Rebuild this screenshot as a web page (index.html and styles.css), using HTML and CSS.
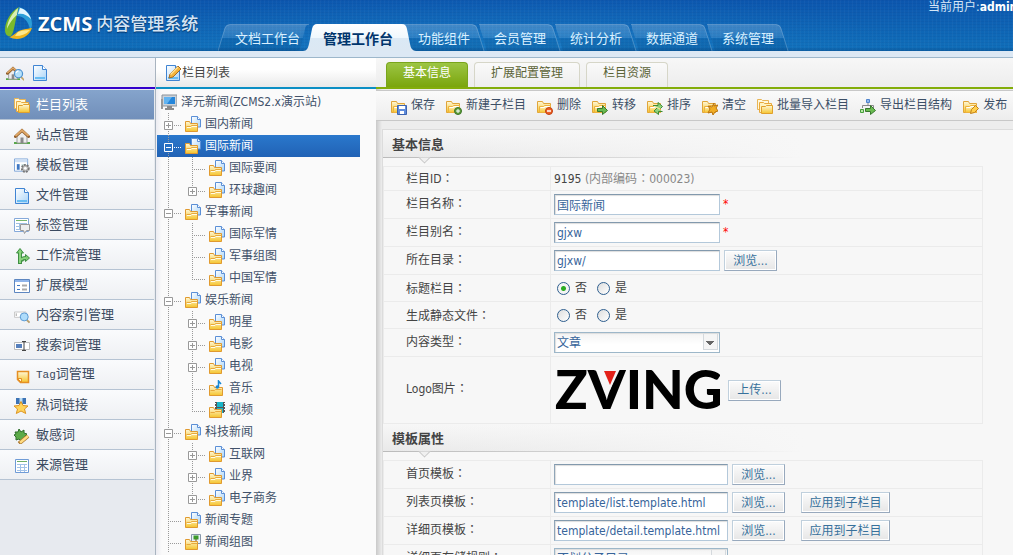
FILE: index.html
```html
<!DOCTYPE html>
<html lang="zh-CN">
<head>
<meta charset="utf-8">
<title>ZCMS内容管理系统</title>
<link rel="stylesheet" href="styles.css">
</head>
<body>
<svg class="sprite" aria-hidden="true">
  <defs>
    <linearGradient id="gold" x1="0" y1="0" x2="0" y2="1"><stop offset="0" stop-color="#fff8d8"/><stop offset="1" stop-color="#f5c42c"/></linearGradient>
    <linearGradient id="paper" x1="0" y1="0" x2="1" y2="1"><stop offset="0" stop-color="#fff"/><stop offset="1" stop-color="#a9d4f8"/></linearGradient>
    <linearGradient id="tabfill" x1="0" y1="0" x2="0" y2="1"><stop offset="0" stop-color="#fff"/><stop offset=".5" stop-color="#f0f8fd"/><stop offset=".52" stop-color="#dbe9f5"/><stop offset="1" stop-color="#dce8f3"/></linearGradient>
    <linearGradient id="dimfill" x1="0" y1="0" x2="0" y2="1"><stop offset="0" stop-color="#fff" stop-opacity=".2"/><stop offset=".5" stop-color="#fff" stop-opacity=".1"/><stop offset=".52" stop-color="#003a70" stop-opacity=".12"/><stop offset="1" stop-color="#003a70" stop-opacity=".2"/></linearGradient>
  </defs>
  <symbol id="folder" viewBox="0 0 16 16">
    <path d="M.5 13.5v-11h5l1 2h7v9z" fill="url(#gold)" stroke="#e0a53a"/>
    <path d="M2.5 13.5v-6h4l1-1h6v7z" fill="url(#gold)" stroke="#eeb23c"/>
    <path d="M3.500 8.500h4l1-1h4" fill="none" stroke="#fff"/>
  </symbol>
  <symbol id="folders" viewBox="0 0 16 16">
    <path d="M.5 10.500v-10h4l1 1h6v9z" fill="#fff8dc" stroke="#e9b555"/>
    <path d="M2.500 13.500v-10h4l1 1h7v9z" fill="#fff3c0" stroke="#e9a93c"/>
    <path d="M4.500 14.500v-7h4l1-1h6v8z" fill="url(#gold)" stroke="#e0a02c"/>
  </symbol>
  <symbol id="node" viewBox="0 0 16 16">
    <path d="M6.500 11V.5h6l3 3V11z" fill="url(#paper)" stroke="#5b8fd6"/>
    <path d="M12.500.5v3h3" fill="#fff" stroke="#5b8fd6"/>
    <path d="M.5 15.500v-10h4l1 2h7v8z" fill="url(#gold)" stroke="#e09a30"/>
    <path d="M1.500 10.500h4l1-1h6" fill="none" stroke="#e8a93c"/>
    <path d="M2 11.500h4l1-1h5" fill="none" stroke="#fffbe6"/>
  </symbol>
  <symbol id="node-music" viewBox="0 0 16 16">
    <path d="M.5 15.500v-10h4l1 2h8v8z" fill="url(#gold)" stroke="#e09a30"/>
    <path d="M1.500 10.500h4l1-1h6" fill="none" stroke="#e8a93c"/>
    <path d="M9.500 7V1l2.500 3" fill="none" stroke="#1787d4" stroke-width="1.500"/><circle cx="8.300" cy="7" r="1.800" fill="#1787d4"/>
  </symbol>
  <symbol id="node-video" viewBox="0 0 16 16">
    <path d="M6 0h10v11H6z" fill="#555"/><path d="M8 0h6v5H8zM8 6h6v5H8z" fill="#19b5c8"/>
    <path d="M6.500 1v10M15.500 1v10" stroke="#fff" stroke-dasharray="1 2"/>
    <path d="M.5 15.500v-10h4l1 2h7v8z" fill="url(#gold)" stroke="#e09a30"/>
    <path d="M1.500 10.500h4l1-1h6" fill="none" stroke="#e8a93c"/>
  </symbol>
  <symbol id="node-image" viewBox="0 0 16 16">
    <path d="M6.500.5h9v9h-9z" fill="#e8f2fb" stroke="#8796a8"/><path d="M8.500 1.500h5v4h-5z" fill="#3d9a2a"/><path d="M11 5v4" stroke="#7a5326"/>
    <path d="M.5 15.500v-10h4l1 2h7v8z" fill="url(#gold)" stroke="#e09a30"/>
    <path d="M1.500 10.500h4l1-1h6" fill="none" stroke="#e8a93c"/>
  </symbol>
  <symbol id="doc" viewBox="0 0 16 16">
    <path d="M1.500.5h9l4 4v11h-13z" fill="url(#paper)" stroke="#3f84d3"/><path d="M10.500.5v4h4" fill="#fff" stroke="#3f84d3"/><path d="M3 12h10v2H3z" fill="#69bdf3"/>
  </symbol>
  <symbol id="house" viewBox="0 0 16 16">
    <path d="M0 14h16v2H0z" fill="#58a84a"/><path d="M3 8l5-5 5 5v7H3z" fill="#eee" stroke="#999"/><path d="M6.500 9.500h3V15h-3z" fill="#888"/>
    <path d="M1.500 8.500L8 2.500l6.500 6" fill="none" stroke="#8f5a26" stroke-width="3" stroke-linecap="round"/><path d="M1.500 8L8 2.300 14.500 8" fill="none" stroke="#dfa868" stroke-width="1.800"/>
  </symbol>
  <symbol id="glass" viewBox="0 0 16 16"><path d="M11 11l4 4" stroke="#c4a465" stroke-width="2"/><circle cx="8" cy="7" r="5" fill="#b5e0fa" stroke="#4f92cf" stroke-width="1.500"/><path d="M5 6q1-2.500 3-2.500" fill="none" stroke="#fff" stroke-width="1.500"/></symbol>
  <symbol id="template" viewBox="0 0 17 16">
    <path d="M.5.500h14v13H.5z" fill="#fff" stroke="#7ba3d8"/><path d="M1 1h13v3H1z" fill="#cfe0f5"/><path d="M3 6h3v6H3z" fill="#3f78c4"/><path d="M8 7h4" stroke="#8bb"/>
    <circle cx="12" cy="10.500" r="3.700" fill="#bbb" stroke="#777" stroke-width="2" stroke-dasharray="2 1.100"/><circle cx="12" cy="10.500" r="1.500" fill="#fff"/>
  </symbol>
  <symbol id="label" viewBox="0 0 16 16">
    <path d="M.5.500h14v13H.5z" fill="#fff" stroke="#85a9da"/><path d="M2 2.500h11" stroke="#77b66b"/><path d="M2 5.500h11M2 8.500h8M2 11.500h5M5.500 5v7M9.500 5v7" stroke="#9fc0e2"/>
    <path d="M6.500 6.500h9v6h-3l-2 3-1-3h-3z" fill="#eee" stroke="#999"/>
  </symbol>
  <symbol id="flow" viewBox="0 0 16 16"><path d="M6 16V4" stroke="#3f8f43" stroke-width="4" fill="none"/><path d="M7 13q1-3 5-3" stroke="#3f8f43" stroke-width="4" fill="none"/><path d="M2.500 5L6 .500 9.500 5zM11.500 6.500l4 3.500-4 3.500z" fill="#7ccb70" stroke="#3f8f43"/><path d="M6 15V3M7 12q1-2 5-2" stroke="#8ad47e" stroke-width="2" fill="none"/></symbol>
  <symbol id="model" viewBox="0 0 16 16"><path d="M.5 1.500h15v13H.5z" fill="#fff" stroke="#5d86c0"/><path d="M1 2h14v2H1z" fill="#8fb4ea"/><path d="M3 7.500h3M3 11.500h3" stroke="#3f78c4"/><path d="M8 7.500h5M8 11.500h5" stroke="#aaa" stroke-width="2"/></symbol>
  <symbol id="index" viewBox="0 0 18 16"><path d="M.5 3.500h13v6H.5z" fill="#fff" stroke="#c2c2c2"/><path d="M2.500 5v3" stroke="#999"/><path d="M14 12l3.500 3.500" stroke="#b79d6a" stroke-width="2"/><circle cx="11.500" cy="9" r="4.500" fill="#aedcfb" stroke="#4f92cf"/></symbol>
  <symbol id="search-word" viewBox="0 0 16 16"><path d="M.5 4.500h15v7H.5z" fill="#fff" stroke="#bbb"/><path d="M2 6h6v4H2z" fill="#5680bd"/><path d="M8 3.500h4M10 3v9M8 12.500h4" stroke="#444" fill="none"/></symbol>
  <symbol id="tag" viewBox="0 0 16 16"><path d="M3.500 3.500h11v11h-8l-3-3z" fill="url(#gold)" stroke="#e58f24" stroke-width="1.500"/><path d="M3.500 10.500h4v4z" fill="#fff6cd" stroke="#e58f24"/></symbol>
  <symbol id="star" viewBox="0 0 16 16"><path d="M2 0h10v6H2z" fill="#3c73b5"/><path d="M5.500 0h3v5h-3z" fill="#bbdcf3"/><path d="M7 3.500l2 4 5 .5-3.500 3 1.200 4.500L7 13l-4.700 2.500L3.500 11 0 8l5-.5z" fill="#ffd45b" stroke="#dc9422"/></symbol>
  <symbol id="sensitive" viewBox="0 0 16 16"><path d="M1 4l3 0 1-3 2 3 3-2v3l3 1-2 2 1 3-3 0-2 2-2-2-3 1 0-3-2-2 2-1z" fill="#5cab48" stroke="#2e6e2b"/><path d="M5 15.500L14 8" stroke="#a8732a" stroke-width="4"/><path d="M6 14.700L14 8" stroke="#ffdc83" stroke-width="2.500"/></symbol>
  <symbol id="source" viewBox="0 0 16 16"><path d="M1.500 1.500h13v13h-13z" fill="#fff" stroke="#6f9bd6"/><path d="M3 3.500h10" stroke="#6eae66"/><path d="M3 6.500h10M3 9.500h10M3 12.500h10M6.500 6v8M10.500 6v8" stroke="#a2c2e8"/></symbol>
  <symbol id="pencil" viewBox="0 0 16 16"><path d="M4 13l1-4 8-8 3 3-8 8z" fill="#f3b33c" stroke="#a76c20"/><path d="M5.500 9.500L13 2" stroke="#ffe49a" stroke-width="1.500"/></symbol>
  <symbol id="monitor" viewBox="0 0 16 16"><path d="M1 1h15v11H1z" fill="#ccd2d8" stroke="#89929b"/><path d="M3 3h11v7H3z" fill="#2586da"/><path d="M3 3h8l-5 7H3z" fill="#62b4f1"/><path d="M6 12h5v2h2v2H4v-2h2z" fill="#8b8b8b"/><path d="M0 5h2v10H0z" fill="#999"/></symbol>
  <symbol id="minus" viewBox="0 0 24 22"><path d="M3.500 8.500h8v8h-8z" class="box"/><path d="M5 12.500h5" stroke="currentColor"/><path d="M13 12.500h8" stroke="currentColor" stroke-dasharray="1 1"/></symbol>
  <symbol id="plus" viewBox="0 0 24 22"><path d="M3.500 8.500h8v8h-8z" class="box"/><path d="M5 12.500h5M7.500 10v5" stroke="currentColor"/><path d="M13 12.500h8" stroke="currentColor" stroke-dasharray="1 1"/></symbol>
  <symbol id="leaf" viewBox="0 0 24 22"><path d="M7 12.500h14" stroke="currentColor" stroke-dasharray="1 1"/></symbol>
  <symbol id="tab-next" viewBox="0 0 84 27"><path d="M0 .5h69q4 0 5 4l7 22.500H8L1 4Q1 1 0 .5z" fill="url(#dimfill)"/><path d="M0 .5h69q4 0 5 4l7 22.500" fill="none" stroke="#fff" stroke-opacity=".22"/></symbol>
</svg>

<header class="top">
  <a class="brand" href="#">
    <svg width="30" height="34" viewBox="0 0 30 34" aria-hidden="true">
      <path d="M14 0C5 5 0 15 0 23c0 5 3 7 6 6 4-5 4-18 8-29z" fill="#7ab92b"/><path d="M13 1C7 6 2 15 2 22c2-5 6-11 10-14z" fill="#d9efb4"/>
      <path d="M14 0c8 2 13 9 13 17 0 3-1 5-2 6-1-8-6-14-13-14z" fill="#2c9ed8"/><path d="M15 1c5 1 9 5 11 11-4-4-8-6-13-5z" fill="#e4f6ff"/>
      <path d="M4 30c8 4 19 2 23-9-5 1-12 1-16 5-3 2-5 4-7 4z" fill="#f1b51c"/><path d="M10 29q10 0 15-6-8 0-12 2z" fill="#ffe98d"/>
    </svg>
    <strong>ZCMS</strong><span>内容管理系统</span>
  </a>
  <nav class="main-tabs">
    <a class="main-tab first" href="#"><svg width="92" height="27" viewBox="0 0 92 27" aria-hidden="true"><path d="M0 27L7 4q1-3.500 5-3.500h79q-3 0-4 4l-4 18q-1 4-5 4.500z" fill="url(#dimfill)"/><path d="M0 27L7 4q1-3.500 5-3.500h79" fill="none" stroke="#fff" stroke-opacity=".22"/></svg><span>文档工作台</span></a>
    <a class="main-tab active" href="#"><svg width="116" height="27" viewBox="0 0 116 27" aria-hidden="true"><path d="M0 27c4 0 5-3 6-7l3-15q1-5 5-5h85q4 0 5 5l3 15q1 7 6 7z" fill="url(#tabfill)"/></svg><span>管理工作台</span></a>
    <a class="main-tab" href="#"><svg width="84" height="27" aria-hidden="true"><use href="#tab-next"/></svg><span>功能组件</span></a>
    <a class="main-tab" href="#"><svg width="84" height="27" aria-hidden="true"><use href="#tab-next"/></svg><span>会员管理</span></a>
    <a class="main-tab" href="#"><svg width="84" height="27" aria-hidden="true"><use href="#tab-next"/></svg><span>统计分析</span></a>
    <a class="main-tab" href="#"><svg width="84" height="27" aria-hidden="true"><use href="#tab-next"/></svg><span>数据通道</span></a>
    <a class="main-tab" href="#"><svg width="84" height="27" aria-hidden="true"><use href="#tab-next"/></svg><span>系统管理</span></a>
  </nav>
  <p class="user">当前用户:<b>admin</b></p>
</header>

<div class="workspace">
  <aside class="sidebar">
    <div class="bar side-bar">
      <button aria-label="站点预览"><svg width="18" height="16" viewBox="0 0 18 16"><use href="#house" width="14" height="16"/><use href="#glass" x="6" y="3" width="13" height="13"/></svg></button>
      <button aria-label="文档"><svg width="16" height="16"><use href="#doc"/></svg></button>
    </div>
    <nav class="menu">
      <a class="current" href="#"><svg><use href="#folders"/></svg>栏目列表</a>
      <a href="#"><svg><use href="#house"/></svg>站点管理</a>
      <a href="#"><svg><use href="#template"/></svg>模板管理</a>
      <a href="#"><svg><use href="#doc"/></svg>文件管理</a>
      <a href="#"><svg><use href="#label"/></svg>标签管理</a>
      <a href="#"><svg><use href="#flow"/></svg>工作流管理</a>
      <a href="#"><svg><use href="#model"/></svg>扩展模型</a>
      <a href="#"><svg><use href="#index"/></svg>内容索引管理</a>
      <a href="#"><svg><use href="#search-word"/></svg>搜索词管理</a>
      <a href="#"><svg><use href="#tag"/></svg><span><span class="latin">Tag</span>词管理</span></a>
      <a href="#"><svg><use href="#star"/></svg>热词链接</a>
      <a href="#"><svg><use href="#sensitive"/></svg>敏感词</a>
      <a href="#"><svg><use href="#source"/></svg>来源管理</a>
    </nav>
  </aside>

  <section class="tree-panel">
    <h2 class="bar tree-bar"><svg width="16" height="16" viewBox="0 0 16 16"><use href="#doc"/><use href="#pencil"/></svg>栏目列表</h2>
    <a class="root" href="#"><svg><use href="#monitor"/></svg>泽元新闻(ZCMS2.x演示站)</a>
    <ul class="tree">
      <li><a class="node" href="#"><svg class="guide"><use href="#plus"/></svg><svg><use href="#node"/></svg>国内新闻</a></li>
      <li class="selected"><a class="node" href="#"><svg class="guide"><use href="#minus"/></svg><svg><use href="#node"/></svg>国际新闻</a>
        <ul>
          <li><a class="node" href="#"><svg class="guide"><use href="#leaf"/></svg><svg><use href="#node"/></svg>国际要闻</a></li>
          <li><a class="node" href="#"><svg class="guide"><use href="#plus"/></svg><svg><use href="#node"/></svg>环球趣闻</a></li>
        </ul>
      </li>
      <li><a class="node" href="#"><svg class="guide"><use href="#minus"/></svg><svg><use href="#node"/></svg>军事新闻</a>
        <ul>
          <li><a class="node" href="#"><svg class="guide"><use href="#leaf"/></svg><svg><use href="#node"/></svg>国际军情</a></li>
          <li><a class="node" href="#"><svg class="guide"><use href="#leaf"/></svg><svg><use href="#node"/></svg>军事组图</a></li>
          <li><a class="node" href="#"><svg class="guide"><use href="#leaf"/></svg><svg><use href="#node"/></svg>中国军情</a></li>
        </ul>
      </li>
      <li><a class="node" href="#"><svg class="guide"><use href="#minus"/></svg><svg><use href="#node"/></svg>娱乐新闻</a>
        <ul>
          <li><a class="node" href="#"><svg class="guide"><use href="#plus"/></svg><svg><use href="#node"/></svg>明星</a></li>
          <li><a class="node" href="#"><svg class="guide"><use href="#plus"/></svg><svg><use href="#node"/></svg>电影</a></li>
          <li><a class="node" href="#"><svg class="guide"><use href="#plus"/></svg><svg><use href="#node"/></svg>电视</a></li>
          <li><a class="node" href="#"><svg class="guide"><use href="#leaf"/></svg><svg><use href="#node-music"/></svg>音乐</a></li>
          <li><a class="node" href="#"><svg class="guide"><use href="#leaf"/></svg><svg><use href="#node-video"/></svg>视频</a></li>
        </ul>
      </li>
      <li><a class="node" href="#"><svg class="guide"><use href="#minus"/></svg><svg><use href="#node"/></svg>科技新闻</a>
        <ul>
          <li><a class="node" href="#"><svg class="guide"><use href="#plus"/></svg><svg><use href="#node"/></svg>互联网</a></li>
          <li><a class="node" href="#"><svg class="guide"><use href="#plus"/></svg><svg><use href="#node"/></svg>业界</a></li>
          <li><a class="node" href="#"><svg class="guide"><use href="#plus"/></svg><svg><use href="#node"/></svg>电子商务</a></li>
        </ul>
      </li>
      <li><a class="node" href="#"><svg class="guide"><use href="#leaf"/></svg><svg><use href="#node"/></svg>新闻专题</a></li>
      <li><a class="node" href="#"><svg class="guide"><use href="#leaf"/></svg><svg><use href="#node-image"/></svg>新闻组图</a></li>
    </ul>
  </section>

  <main class="content">
    <nav class="bar sub-tabs">
      <a class="active" href="#">基本信息</a><a href="#">扩展配置管理</a><a href="#">栏目资源</a>
    </nav>
    <div class="toolbar">
      <button><svg viewBox="0 0 16 16"><use href="#folder"/><path d="M6.500 6.500h9v9h-9z" fill="#5f8cdb" stroke="#3c63b0"/><path d="M8 7h6v3H8zM9 12h4v3H9z" fill="#fff"/></svg>保存</button>
      <button><svg viewBox="0 0 16 16"><use href="#folder"/><circle cx="12" cy="12" r="3.500" fill="#5d9e3c" stroke="#3d7425"/><path d="M12 10v4M10 12h4" stroke="#fff"/></svg>新建子栏目</button>
      <button><svg viewBox="0 0 16 16"><use href="#folder"/><circle cx="12" cy="12" r="3.500" fill="#ee6228" stroke="#c0400f"/><path d="M10 12h4" stroke="#fff" stroke-width="1.500"/></svg>删除</button>
      <button><svg viewBox="0 0 16 16"><use href="#folder"/><path d="M5.500 9.500h5v-3l5 5-5 4v-3h-5z" fill="#6abb50" stroke="#38782d"/></svg>转移</button>
      <button><svg viewBox="0 0 16 16"><use href="#folder"/><path d="M6 6.500h5v-3l4.500 4-2 2M15.500 12.500h-4v3L7 12l3-3" fill="#8fd27c" stroke="#3f8a35"/></svg>排序</button>
      <button><svg viewBox="0 0 16 16"><use href="#folder"/><path d="M12 4l-2 4-4-1 2 3-2 4 4-1 1 3 2-3 3-1-2-3 2-3-4 1z" fill="#f0ad24" stroke="#b97513"/></svg>清空</button>
      <button><svg viewBox="0 0 16 16"><use href="#folders"/></svg>批量导入栏目</button>
      <button><svg viewBox="0 0 16 16"><path d="M6.500.500h3v3h-3z" fill="#8fb8ec" stroke="#4f83cc"/><path d="M8 4v3M2.500 9V6.500h11V9" fill="none" stroke="#888"/><path d="M.500 10.500h3v3h-3z" fill="#b8e6a6" stroke="#46a03b"/><path d="M5.500 9.500h5v-3l5 5-5 4v-3h-5z" fill="#6abb50" stroke="#38782d"/></svg>导出栏目结构</button>
      <button><svg viewBox="0 0 16 16"><use href="#folder"/><path d="M7.500 14.500l1-4 4-4 3 3-4 4z" fill="#ffcf4c" stroke="#c0801c"/></svg>发布</button>
    </div>

    <form class="sheet">
      <h3 class="section">基本信息</h3>
      <table class="fields">
        <tr class="short"><th>栏目ID<span class="colon" lang="zh-TW">：</span></th><td>9195 <span class="muted">(内部编码<span class="colon" lang="zh-TW">：</span>000023)</span></td></tr>
        <tr><th><label for="name">栏目名称<span class="colon" lang="zh-TW">：</span></label></th><td><input class="text" id="name" value="国际新闻"><span class="req">*</span></td></tr>
        <tr><th><label for="alias">栏目别名<span class="colon" lang="zh-TW">：</span></label></th><td><input class="text" id="alias" value="gjxw"><span class="req">*</span></td></tr>
        <tr><th><label for="dir">所在目录<span class="colon" lang="zh-TW">：</span></label></th><td><input class="text" id="dir" value="gjxw/"><button type="button" class="btn">浏览...</button></td></tr>
        <tr class="radios"><th>标题栏目<span class="colon" lang="zh-TW">：</span></th><td><label><input type="radio" name="title" checked>否</label><label><input type="radio" name="title">是</label></td></tr>
        <tr class="radios"><th>生成静态文件<span class="colon" lang="zh-TW">：</span></th><td><label><input type="radio" name="static">否</label><label><input type="radio" name="static">是</label></td></tr>
        <tr><th><label for="type">内容类型<span class="colon" lang="zh-TW">：</span></label></th><td><select class="text" id="type"><option>文章</option></select></td></tr>
        <tr class="tall"><th>Logo图片<span class="colon" lang="zh-TW">：</span></th><td><svg class="zving" width="166" height="44" viewBox="0 0 166 44" role="img" aria-label="ZVING"><text x="1" y="41">ZVING</text><path d="M46 1h20l-10 21z" fill="#f7f7f7"/><path d="M50 3h12l-6 14z" fill="#e32119"/></svg><button type="button" class="btn">上传...</button></td></tr>
      </table>
      <h3 class="section">模板属性</h3>
      <table class="fields">
        <tr><th><label for="home">首页模板<span class="colon" lang="zh-TW">：</span></label></th><td><input class="text wide" id="home"><button type="button" class="btn">浏览...</button></td></tr>
        <tr><th><label for="list">列表页模板<span class="colon" lang="zh-TW">：</span></label></th><td><input class="text wide" id="list" value="template/list.template.html"><button type="button" class="btn">浏览...</button><button type="button" class="btn apply">应用到子栏目</button></td></tr>
        <tr><th><label for="detail">详细页模板<span class="colon" lang="zh-TW">：</span></label></th><td><input class="text wide" id="detail" value="template/detail.template.html"><button type="button" class="btn">浏览...</button><button type="button" class="btn apply">应用到子栏目</button></td></tr>
        <tr><th><label for="rule">详细页存储规则<span class="colon" lang="zh-TW">：</span></label></th><td><select class="text wide" id="rule"><option>不划分子目录</option></select></td></tr>
      </table>
    </form>
  </main>
</div>
</body>
</html>
```

FILE: styles.css
```css
* { box-sizing: border-box; }

body {
  margin: 0;
  height: 100vh;
  overflow: hidden;
  display: flex;
  flex-direction: column;
  background: #ededed;
  color: #444;
  font: 12px/16px "DejaVu Sans Condensed", "Noto Sans CJK SC", sans-serif;
}

a { color: inherit; text-decoration: none; }
button, input, select { font: inherit; color: inherit; margin: 0; }
button { padding: 0; border: 0; background: none; white-space: nowrap; }
h2, h3, p, ul { margin: 0; padding: 0; font-size: 12px; font-weight: normal; }
ul { list-style: none; }
svg { display: block; flex: none; }
svg:not([width]) { width: 16px; height: 16px; }
.sprite { position: absolute; }
.sprite:not([width]) { width: 0; height: 0; }
.box { fill: var(--box, #fff); stroke: currentColor; }

/* Header */
.top {
  display: flex;
  height: 58px;
  flex: none;
  border-bottom: 1px solid #9db7cb;
  background:
    linear-gradient(#dce8f4, #dce8f4) 0 100% / 100% 6px no-repeat,
    linear-gradient(transparent 47px, rgba(0, 50, 110, .35) 51px),
    repeating-linear-gradient(90deg, rgba(255, 255, 255, .03) 0 1px, transparent 1px 4px),
    repeating-linear-gradient(rgba(0, 20, 80, .05) 0 1px, transparent 1px 3px),
    radial-gradient(ellipse 400px 60px at 50% 50px, rgba(40, 150, 220, .3), transparent),
    linear-gradient(#0c56ae, #1070ba 51px);
}
.brand {
  display: flex;
  align-items: center;
  width: 218px;
  height: 47px;
  padding-left: 5px;
  color: #fff;
  font-size: 17px;
  text-shadow: 0 1px 1px #06356b;
}
.brand strong { margin: 0 4px 0 3px; font-family: "Open Sans", sans-serif; font-size: 20px; }
.brand span { color: #d6e5f4; font-weight: 500; white-space: nowrap; }
.main-tabs { display: flex; padding-top: 24px; color: #d9f0ff; font-size: 13px; }
.main-tab { display: grid; width: 76px; height: 27px; flex: none; }
.main-tab svg, .main-tab span { grid-area: 1 / 1; }
.main-tab span { z-index: 1; padding-left: 15px; line-height: 30px; white-space: nowrap; }
.main-tab.first { width: 85px; }
.main-tab.first span { padding-left: 17px; }
.main-tab.active { z-index: 1; width: 100px; color: #00356c; font-size: 14px; font-weight: bold; }
.main-tab.active span { padding-left: 20px; }
.user { flex: 0 0 85px; min-width: 0; margin-left: auto; color: #d5e7f7; line-height: 14px; white-space: nowrap; }
.user b { color: #fff; }

/* Frame */
.workspace {
  flex: 1;
  min-height: 0;
  display: grid;
  grid-template-columns: 156px 220px minmax(0, 1fr);
}
.bar {
  display: flex;
  align-items: center;
  height: 31px;
  border-bottom: 2px solid;
}

/* Sidebar */
.sidebar { overflow: hidden; border-right: 1px solid #a9b4c0; background: #e7eaef; }
.side-bar { gap: 8px; padding-left: 6px; border-color: #3300cc; background: linear-gradient(#f4f5f9, #e9ebf0); }
.menu { margin: 1px 1px 0 0; }
.menu a {
  display: flex;
  align-items: center;
  gap: 6px;
  height: 30px;
  padding-left: 14px;
  border-bottom: 1px solid #b5c3d3;
  background: linear-gradient(#fafbfd, #eef0f3);
  color: #3a4a60;
  font-size: 13px;
}
.menu a svg { margin-top: 3px; }
.menu .current { background: linear-gradient(#85a4cc, #718fba); color: #fff; }
.menu .latin { font-family: "Liberation Mono", monospace; font-size: 11px; }

/* Column tree */
.tree-panel { overflow: hidden; background: linear-gradient(90deg, #ececf2, #fafafa 6px); }
.tree-bar { padding-left: 9px; gap: 1px; border-color: #0c8fc4; background: linear-gradient(#fff 40%, #e9e9e9); }
.root, .node { display: flex; align-items: center; height: 22px; color: #42526a; white-space: nowrap; gap: 4px; line-height: 14px; padding-bottom: 1px; }
.root { margin-top: 2px; padding-left: 5px; }
.node { gap: 0; padding-right: 8px; }
.node svg + svg { margin-right: 4px; }
.node .guide { width: 24px; height: 22px; color: #999; }
.tree { margin-left: 1px; }
.tree li { background: repeating-linear-gradient(#999 0 1px, transparent 1px 2px) 7px 0 / 1px 100% no-repeat; }
.tree > li { padding-left: 4px; background-position: 11px 0; }
.tree ul { padding-left: 24px; }
.tree ul > li:last-child { background-size: 1px 12px; }
.tree > .selected {
  background:
    repeating-linear-gradient(#999 0 1px, transparent 1px 2px) 11px 0 / 1px 100% no-repeat,
    linear-gradient(#2a78cc, #2162b5) 0 0 / 203px 22px no-repeat;
}
.selected > .node, .selected > .node .guide { --box: #2670c4; color: #fff; }

/* Content */
.content { overflow: hidden; background: linear-gradient(90deg, #c9c9c9, #ededed 6px); }
.sub-tabs { align-items: flex-end; gap: 6px; padding-left: 10px; border-color: #83ad0a; background: linear-gradient(#f7f7f7, #ededed); }
.sub-tabs a {
  height: 25px;
  padding: 0 16px;
  border: 1px solid #d6d6c8;
  border-bottom: 0;
  border-radius: 4px 4px 0 0;
  background: linear-gradient(#fafafa, #eee);
  color: #5b6336;
  line-height: 21px;
}
.sub-tabs .active { border-color: #79a51c; background: linear-gradient(#9cc544, #7aa50c); color: #fff; }
.toolbar {
  display: flex;
  gap: 11px;
  height: 31px;
  margin-top: 1px;
  padding-left: 15px;
  border: solid #c8c8c8;
  border-width: 1px 0;
  background: linear-gradient(#fafafa, #ededed);
  color: #3c4f66;
}
.toolbar button { display: flex; align-items: center; gap: 4px; flex: none; height: 27px; }
.toolbar svg { margin-top: 4px; }

.sheet { margin: 8px 0 0 6px; border: solid #dcdcdc; border-width: 1px 0 0 1px; background: #f7f7f7; }
.section {
  position: relative;
  height: 28px;
  margin-bottom: 8px;
  padding-left: 9px;
  background:
    linear-gradient(90deg, #bbb, transparent 420px) 0 100% / 100% 1px no-repeat,
    linear-gradient(90deg, rgba(247, 247, 247, 0), #f7f7f7 420px),
    linear-gradient(#f7f7f7, #e9e9e9);
  font-size: 13px;
  font-weight: bold;
  line-height: 30px;
}
.section::after {
  content: "";
  position: absolute;
  left: 37px;
  bottom: -4px;
  width: 8px;
  height: 8px;
  border: solid #bbb;
  border-width: 0 1px 1px 0;
  background: #f0f0f0;
  transform: rotate(45deg);
  clip-path: polygon(100% 0, 100% 100%, 0 100%);
}
.fields { width: calc(100% - 30px); border-collapse: collapse; table-layout: fixed; }
.fields th, .fields td { height: 28px; padding: 0 3px; border: 1px solid #ebebeb; vertical-align: middle; white-space: nowrap; }
.fields th { width: 167px; padding: 0 0 3px 22px; font-weight: normal; text-align: left; }
.fields .short th, .fields .short td { height: 24px; padding-bottom: 0; }
.fields .radios th, .fields .radios td { height: 27px; padding-bottom: 0; }
.fields .tall th, .fields .tall td { height: 67px; }
.colon { font-family: "Noto Sans CJK TC", sans-serif; }
.muted { color: #888; }
.text {
  width: 166px;
  height: 21px;
  padding: 0 2px;
  border: 1px solid #b3c8da;
  border-top-color: #8299ad;
  border-left-color: #8fa5b8;
  border-radius: 0;
  background: #fff;
  box-shadow: inset 1px 1px 1px #ddd;
  color: #37649a;
  vertical-align: middle;
}
.wide { width: 174px; }
select.text {
  appearance: none;
  border-color: #9db7c9;
  background:
    linear-gradient(#666, #666) right 5px top 8px / 8px 1px no-repeat,
    linear-gradient(#666, #666) right 6px top 9px / 6px 1px no-repeat,
    linear-gradient(#666, #666) right 7px top 10px / 4px 1px no-repeat,
    linear-gradient(#666, #666) right 8px top 11px / 2px 1px no-repeat,
    linear-gradient(#f5f5f5, #f5f5f5) right 2px top 1px / 13px 15px no-repeat,
    linear-gradient(#d4d9dd, #d4d9dd) right 1px top 0 / 15px 17px no-repeat,
    linear-gradient(#f3f3f3, #fff 60%);
}
.req { margin-left: 3px; color: #f00; }
.btn {
  width: 53px;
  height: 21px;
  margin-left: 4px;
  border: 1px solid #c0d0dd;
  border-right-color: #98a9bd;
  border-bottom-color: #98a9bd;
  background: linear-gradient(#fbfbfb, #e6e6e6);
  box-shadow: inset 0 0 0 1px #fff;
  color: #37719c;
  line-height: 18px;
  vertical-align: middle;
}
.apply { width: 89px; margin-left: 20px; }
.btn + .apply { margin-left: 16px; }
.radios label { display: inline-flex; align-items: center; gap: 5px; margin: 0 7px 0 3px; vertical-align: middle; }
.radios input {
  appearance: none;
  width: 13px;
  height: 13px;
  border: 1px solid #2f5f8f;
  border-radius: 50%;
  background: linear-gradient(135deg, #ddd, #fff);
}
.radios input:checked { background: radial-gradient(circle, #2cac22 0 2px, #f4f4f4 3px); }
.zving { display: inline-block; vertical-align: middle; margin-right: 4px; }
.zving text { font: 900 54px Lato, sans-serif; fill: #000; }
```
